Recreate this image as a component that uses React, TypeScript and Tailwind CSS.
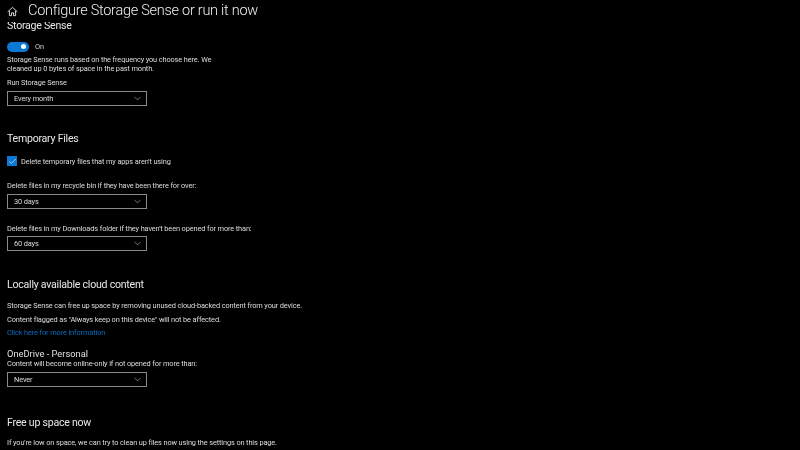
import { ChevronDown, Check } from "lucide-react";

const Heading = ({ children, className = "" }: { children: string; className?: string }) => (
  <h2 className={`text-[10.6px] leading-[16px] tracking-[-0.25px] text-[#e8e8e8] ${className}`}>{children}</h2>
);

const Body = ({ children, className = "" }: { children: string; className?: string }) => (
  <p className={`text-[7.4px] leading-[9px] tracking-[-0.13px] text-[#dcdcdc] whitespace-nowrap ${className}`}>{children}</p>
);

const Select = ({ value, className = "" }: { value: string; className?: string }) => (
  <div className={`flex h-[15px] w-[140px] items-center justify-between border border-[#8a8a8a] pl-[6px] pr-[2px] ${className}`}>
    <span className="text-[7.4px] tracking-[-0.13px] text-[#dcdcdc]">{value}</span>
    <ChevronDown size={11} strokeWidth={1.2} className="mr-[1px] text-[#d0d0d0]" />
  </div>
);

const HomeIcon = () => (
  <svg viewBox="0 0 16 16" className="h-[11px] w-[11px] shrink-0 text-[#f0f0f0]" fill="none" stroke="currentColor" strokeWidth="1.3">
    <path d="M1 8.5 8 2l7 6.5" />
    <path d="M3.5 7v7h3v-4h3v4h3V7" />
  </svg>
);

export default function App() {
  return (
    <div className="relative h-[450px] w-[800px] overflow-hidden bg-black font-['Roboto','Noto_Sans',sans-serif]">
      {/* page title sits over the scrolled content */}
      <header className="relative z-10 flex h-[22px] items-center gap-[10px] bg-black pl-[7px] [will-change:transform]">
        <HomeIcon />
        <h1 className="text-[14.5px] font-light leading-[22px] tracking-[-0.27px] text-[#f0f0f0] whitespace-nowrap">Configure Storage Sense or run it now</h1>
      </header>

      <main className="-mt-[4px] pl-[7px] [will-change:transform]">
        <Heading>Storage Sense</Heading>

        <div className="mt-[7px] flex h-[11px] items-center gap-[6px]">
          <div className="flex h-[10px] w-[22px] items-center justify-end rounded-full bg-[#0a78d4] pr-[3px]">
            <div className="h-[5px] w-[5px] rounded-full bg-white" />
          </div>
          <span className="pt-[1px] text-[7.4px] text-[#d0d0d0]">On</span>
        </div>

        <Body className="mt-[3px]">Storage Sense runs based on the frequency you choose here. We</Body>
        <Body>cleaned up 0 bytes of space in the past month.</Body>
        <Body className="mt-[5px]">Run Storage Sense</Body>
        <Select value="Every month" className="mt-[4px]" />

        <Heading className="mt-[25px]">Temporary Files</Heading>

        <div className="mt-[9px] flex h-[10px] items-center gap-[4px]">
          <div className="flex h-[10px] w-[10px] items-center justify-center bg-[#0a78d4]">
            <Check size={9} strokeWidth={1.6} className="text-white" />
          </div>
          <Body>Delete temporary files that my apps aren't using</Body>
        </div>

        <Body className="mt-[15px]">Delete files in my recycle bin if they have been there for over:</Body>
        <Select value="30 days" className="mt-[4px]" />

        <Body className="mt-[15px]">Delete files in my Downloads folder if they haven't been opened for more than:</Body>
        <Select value="60 days" className="mt-[3px]" />

        <Heading className="mt-[26px]">Locally available cloud content</Heading>

        <Body className="mt-[8px]">Storage Sense can free up space by removing unused cloud-backed content from your device.</Body>
        <Body className="mt-[5px]">Content flagged as "Always keep on this device" will not be affected.</Body>
        <Body className="mt-[4px] !text-[#0a6cbd]">Click here for more information</Body>

        <h3 className="mt-[11px] text-[9.3px] leading-[11px] text-[#e0e0e0]">OneDrive - Personal</h3>
        <Body>Content will become online-only if not opened for more than:</Body>
        <Select value="Never" className="mt-[4px]" />

        <Heading className="mt-[28px]">Free up space now</Heading>
        <Body className="mt-[7px]">If you're low on space, we can try to clean up files now using the settings on this page.</Body>
      </main>
    </div>
  );
}
